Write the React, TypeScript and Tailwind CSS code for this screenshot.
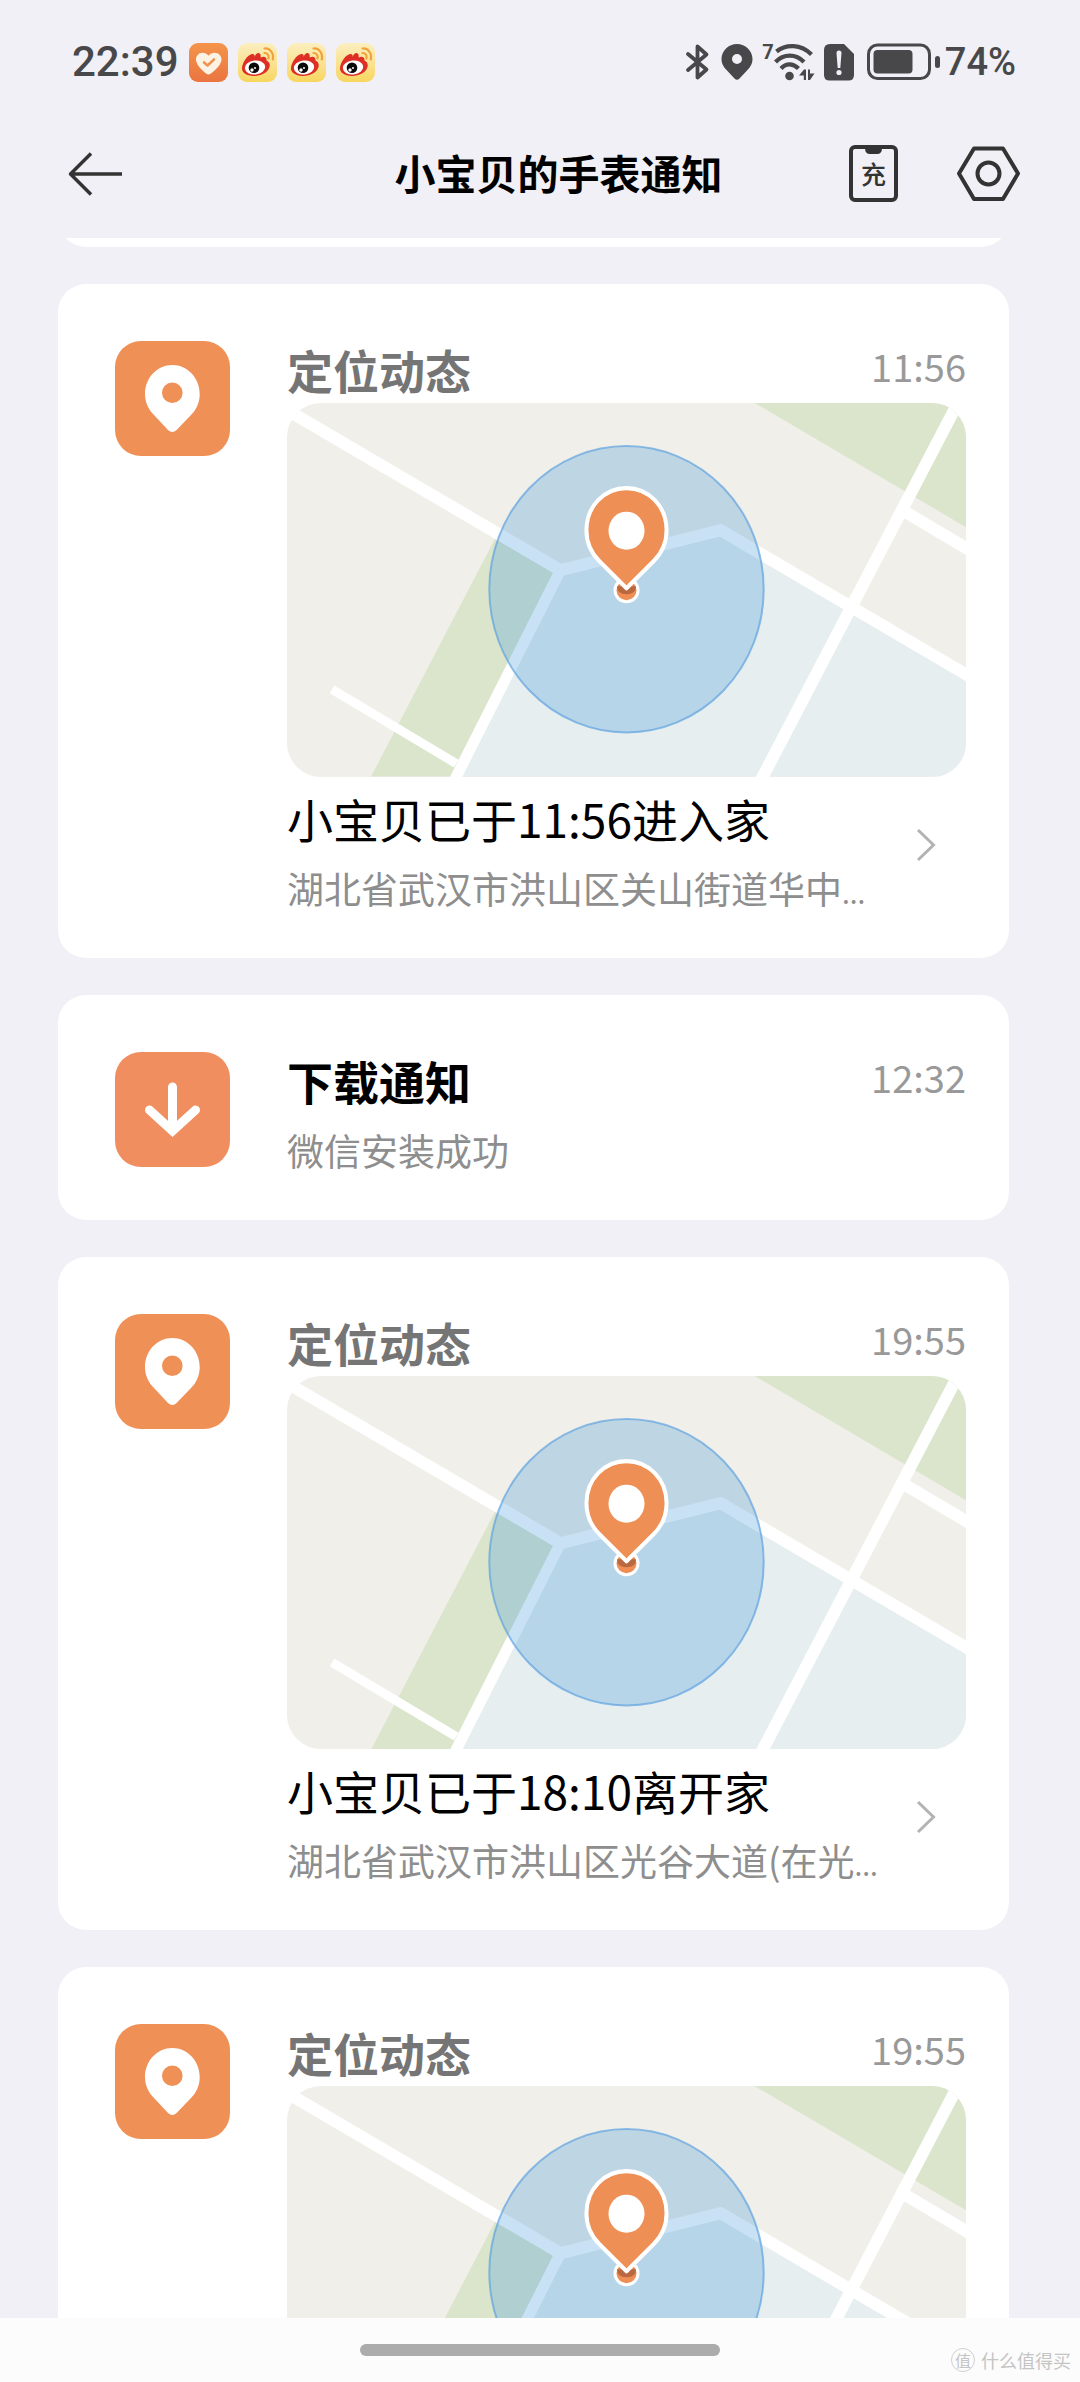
type Notice = {
  id: number;
  kind: "location" | "download";
  title: string;
  time: string;
  message?: string;
  detail?: string;
};

const notices: Notice[] = [
  {
    id: 1,
    kind: "location",
    title: "定位动态",
    time: "11:56",
    message: "小宝贝已于11:56进入家",
    detail: "湖北省武汉市洪山区关山街道华中",
  },
  {
    id: 2,
    kind: "download",
    title: "下载通知",
    time: "12:32",
    detail: "微信安装成功",
  },
  {
    id: 3,
    kind: "location",
    title: "定位动态",
    time: "19:55",
    message: "小宝贝已于18:10离开家",
    detail: "湖北省武汉市洪山区光谷大道(在光",
  },
  { id: 4, kind: "location", title: "定位动态", time: "19:55" },
];

const HeartAppIcon = () => (
  <svg
    className="size-[39px] rounded-[9px] bg-linear-to-b from-[#f4944b] to-[#ea7440]"
    viewBox="0 0 39 39"
  >
    <path
      d="M19.5 31.5C17 31.5 7 22.500 7 16.500C7 12.500 10 9.700 13.500 9.700C16 9.700 18 10.800 19.500 12.700C21 10.800 23 9.700 25.500 9.700C29.500 9.700 32.500 12.500 32.500 16.500C32.500 22.500 22 31.500 19.500 31.500Z"
      fill="#fdf3e4"
    />
    <path
      d="M15 19.500L18.500 22.500L25 16.500"
      fill="none"
      stroke="#ef9450"
      strokeWidth="2.600"
      strokeLinecap="round"
      strokeLinejoin="round"
    />
  </svg>
);

const WeiboAppIcon = () => (
  <svg
    className="size-[39px] rounded-[9px] bg-linear-to-b from-[#fcefc0] to-[#f8d65c]"
    viewBox="0 0 39 39"
  >
    <path
      d="M4 25C4.500 19 9.500 12 14 11C16 10.600 17 12 16.700 14C17.500 10.500 20.500 9 22 10.700C23 12 22.500 13.500 22.800 14.500C25.500 12.800 29 13.500 28.500 17.500C30.500 18.500 32.500 20.500 31.500 24C30 29.500 23 33.200 15.500 33C8.500 32.800 3.600 29.500 4 25Z"
      fill="#dd2f25"
    />
    <ellipse cx="17" cy="24.500" rx="10.200" ry="7" fill="#fff" transform="rotate(-6 17 24.500)" />
    <circle cx="16" cy="24.800" r="5.300" fill="#0b0b0b" />
    <circle cx="14" cy="27" r="1.700" fill="#fff" />
    <circle cx="17" cy="25" r="1" fill="#fff" />
    <path
      d="M26.500 5.500C32 5 36 10 34.800 16.500M26.500 10C29.500 9.800 31.300 12.500 30.500 15.500"
      fill="none"
      stroke="#f0a23c"
      strokeWidth="2.200"
      strokeLinecap="round"
    />
  </svg>
);

const StatusBar = () => (
  <div className="flex h-[124px] shrink-0 items-center justify-between pr-[64px] pl-[72px] font-[Roboto,sans-serif] text-[#48484a]">
    <div className="flex items-center gap-[10px]">
      <span className="text-[42px] leading-[48px] font-medium">22:39</span>
      <HeartAppIcon />
      <WeiboAppIcon />
      <WeiboAppIcon />
      <WeiboAppIcon />
    </div>
    <div className="flex items-center">
      <svg className="h-[38px] w-[26px]" viewBox="0 0 26 38" fill="none">
        <path
          d="M3 11L21.500 26.500L12.500 34.500V3.500L21.500 11.500L3 27"
          stroke="currentColor"
          strokeWidth="3.800"
          strokeLinecap="round"
          strokeLinejoin="round"
        />
      </svg>
      <svg className="ml-[10px] h-[38px] w-[32px]" viewBox="0 0 32 38">
        <path
          fillRule="evenodd"
          fill="currentColor"
          d="M16 1C7.500 1 .500 7.800 .500 16C.500 21 3 24.500 6 27.500L13.500 35.500Q16 38 18.500 35.500L26 27.500C29 24.500 31.500 21 31.500 16C31.500 7.800 24.500 1 16 1ZM16 11A5 5 0 1 1 16 21A5 5 0 1 1 16 11Z"
        />
      </svg>
      <span className="ml-[9px] h-[38px] text-[20px] leading-[18px] font-bold">7</span>
      <svg className="h-[38px] w-[41px]" viewBox="0 0 41 38">
        <g fill="none" stroke="currentColor" strokeWidth="4.200">
          <path d="M2.500 8.500C12 .800 27 .800 37.500 11.500" />
          <path d="M1.500 19C9.500 10.500 22 10.500 30 19" />
          <path d="M7 25.500C12 20 19 20 24.500 25.500" />
        </g>
        <circle cx="15.500" cy="33" r="4.300" fill="currentColor" />
        <path
          d="M25 32.500L30 26.500H32V37H29.800V32.500ZM34 26.500H36V30.500H40.500L36 37H34Z"
          fill="currentColor"
        />
      </svg>
      <svg className="ml-[9px] h-[38px] w-[30px]" viewBox="0 0 30 38">
        <path
          d="M6 1H20L30 11V32Q30 37.500 24.500 37.500H5.500Q0 37.500 0 32V7Q0 1 6 1Z"
          fill="currentColor"
        />
        <path d="M12.500 10Q12.500 7.500 15 7.500T17.500 10L16.300 25H13.700Z" fill="#f1f0f6" />
        <circle cx="15" cy="29.500" r="2.600" fill="#f1f0f6" />
      </svg>
      <svg className="ml-[13px] h-[38px] w-[74px]" viewBox="0 0 74 38">
        <rect
          x="1.500"
          y="2"
          width="61"
          height="33.500"
          rx="9"
          fill="none"
          stroke="currentColor"
          strokeWidth="3"
        />
        <rect x="6.500" y="7" width="39" height="23.500" rx="4" fill="currentColor" />
        <rect x="68" y="13" width="5" height="12" rx="2.500" fill="currentColor" />
      </svg>
      <span className="ml-[4px] text-[38px] leading-[48px] font-medium">74%</span>
    </div>
  </div>
);

const Header = () => (
  <header className="flex h-[114px] shrink-0 items-start pr-[60px] pl-[68px]">
    <button type="button" aria-label="返回" className="w-[200px] pt-[28px]">
      <svg className="h-[44px] w-[55px]" viewBox="0 0 55 44" fill="none">
        <path
          d="M23 1.500L2.500 22L23 42.500M2.500 22H54"
          stroke="#333"
          strokeWidth="3.500"
          strokeLinejoin="round"
        />
      </svg>
    </button>
    <h1 className="flex-1 pt-[18px] text-center text-[41px] leading-[60px] font-bold text-black">
      小宝贝的手表通知
    </h1>
    <div className="flex gap-[59px] pt-[21px]">
      <button type="button" aria-label="充值">
        <svg className="h-[57px] w-[49px]" viewBox="0 0 49 57">
          <rect x="2" y="2" width="45" height="53" rx="4" fill="none" stroke="#333" strokeWidth="4" />
          <path d="M16 3H33Q33 9 28 9H21Q16 9 16 3Z" fill="#333" />
          <text x="24.500" y="39" textAnchor="middle" fontSize="25" fontWeight="500" fill="#333">
            充
          </text>
        </svg>
      </button>
      <button type="button" aria-label="设置">
        <svg className="h-[57px] w-[63px]" viewBox="0 0 63 57" fill="none" stroke="#333" strokeWidth="4">
          <path d="M17 3.500H46L61 28.500L46 54H17L2 28.500Z" strokeLinejoin="round" />
          <circle cx="31.500" cy="28.500" r="11" />
        </svg>
      </button>
    </div>
  </header>
);

const LocationTile = () => (
  <svg className="size-[115px] shrink-0 rounded-[26px] bg-[#ef9057]" viewBox="0 0 115 115">
    <path
      fillRule="evenodd"
      fill="#fff"
      d="M57.300 24C42 24 30 37 30 53C30 62 34 69 39 74L53 89Q57.300 93 61.600 89L76 74C81 69 84.700 62 84.700 53C84.700 37 72.600 24 57.300 24ZM57.300 41.500A10.300 10.300 0 1 1 57.300 62.100A10.300 10.300 0 1 1 57.300 41.500Z"
    />
  </svg>
);

const DownloadTile = () => (
  <svg className="size-[115px] shrink-0 rounded-[26px] bg-[#f08e60]" viewBox="0 0 115 115">
    <path
      d="M57.500 35V78M34.500 58L57.500 79L80.500 58"
      fill="none"
      stroke="#fff"
      strokeWidth="9"
      strokeLinecap="round"
    />
  </svg>
);

const LocationMap = () => (
  <svg className="mt-[6px] block w-full rounded-[34px] bg-[#f0efe9]" viewBox="0 0 678 373">
    <path d="M467 0H678V124Z" fill="#dae5cc" />
    <path d="M209 133L273 167L169 373H84Z" fill="#dae5cc" />
    <path d="M273 167L433 127L678 271V373H169Z" fill="#e6eef0" />
    <g fill="none" stroke="#fff" strokeWidth="12">
      <path d="M-12 0L273 167L433 127L690 278" />
      <path d="M273 167L166 379" strokeWidth="11" />
      <path d="M674 -8L472 379" />
      <path d="M616 108L690 152" />
      <path d="M45 286L169 360" strokeWidth="9" />
    </g>
    <ellipse
      cx="339"
      cy="186"
      rx="137"
      ry="143"
      fill="#4d9bdb"
      fillOpacity="0.300"
      stroke="#5fa3df"
      strokeOpacity="0.700"
      strokeWidth="2"
    />
    <circle cx="339" cy="187" r="11.500" fill="#ee8d54" stroke="#fff" strokeWidth="3" />
    <path d="M329.500 183H348.500Q348.500 191 339 191T329.500 183Z" fill="#b9683f" />
    <path
      d="M339 85C317 85 299 103 299 127C299 139 304 150 312 158L339 185L366 158C374 150 379 139 379 127C379 103 361 85 339 85Z"
      fill="#ee8f55"
      stroke="#fff"
      strokeWidth="4"
      strokeLinejoin="round"
    />
    <ellipse cx="339" cy="127.500" rx="18" ry="19" fill="#fff" />
  </svg>
);

const NoticeCard = ({ notice }: { notice: Notice }) => {
  const isLocation = notice.kind === "location";

  return (
    <article className="flex shrink-0 gap-[57px] rounded-[28px] bg-white pt-[57px] pr-[43px] pb-[45px] pl-[57px]">
      {isLocation ? <LocationTile /> : <DownloadTile />}
      <div className="min-w-0 flex-1">
        <div className="flex items-start justify-between">
          <h2
            className={
              isLocation
                ? "text-[46px] leading-[56px] font-bold text-[#757575]"
                : "text-[46px] leading-[56px] font-bold text-black"
            }
          >
            {notice.title}
          </h2>
          <time className="text-[38px] leading-[50px] text-[#999]">{notice.time}</time>
        </div>
        {isLocation && <LocationMap />}
        {notice.message && (
          <a href="#" className="flex items-center justify-between pr-[30px]">
            <div className="pt-[11px]">
              <p className="text-[46px] leading-[60px] text-black">{notice.message}</p>
              <p className="mt-[15px] text-[37px] leading-[50px] text-[#8e8e8e]">
                {notice.detail}
                <span className="text-[28px] leading-none">...</span>
              </p>
            </div>
            <svg className="h-[34px] w-[20px]" viewBox="0 0 20 34" fill="none">
              <path d="M2 2L17.500 17L2 32" stroke="#b3b3b3" strokeWidth="3" />
            </svg>
          </a>
        )}
        {!isLocation && (
          <p className="mt-[17px] text-[37px] leading-[50px] text-[#8e8e8e]">{notice.detail}</p>
        )}
      </div>
    </article>
  );
};

const Watermark = () => (
  <div className="absolute right-[9px] bottom-[9px] flex items-center gap-[6px] text-[#c4c4c4]">
    <span className="flex size-[24px] items-center justify-center rounded-full border border-[#cfcfcf] text-[16px] leading-[24px]">
      值
    </span>
    <span className="text-[18px] leading-[26px]">什么值得买</span>
  </div>
);

const App = () => {
  return (
    <div className="flex h-screen flex-col bg-[#f1f0f6] font-['Noto_Sans_CJK_SC',sans-serif]">
      <StatusBar />
      <Header />
      <main className="flex min-h-0 flex-1 flex-col gap-[37px] overflow-y-auto pr-[71px] pl-[58px] [scrollbar-width:none]">
        {/* tail of the card scrolled under the header */}
        <div className="flex h-[9px] shrink-0 items-end overflow-hidden">
          <div className="h-[60px] w-full shrink-0 rounded-[28px] bg-white" />
        </div>
        {notices.map((notice) => (
          <NoticeCard key={notice.id} notice={notice} />
        ))}
      </main>
      <footer className="relative flex h-[64px] shrink-0 justify-center bg-[#fcfcfc] pt-[26px]">
        <div className="h-[12px] w-1/3 rounded-full bg-[#acacac]" />
        <Watermark />
      </footer>
    </div>
  );
};

export default App;
